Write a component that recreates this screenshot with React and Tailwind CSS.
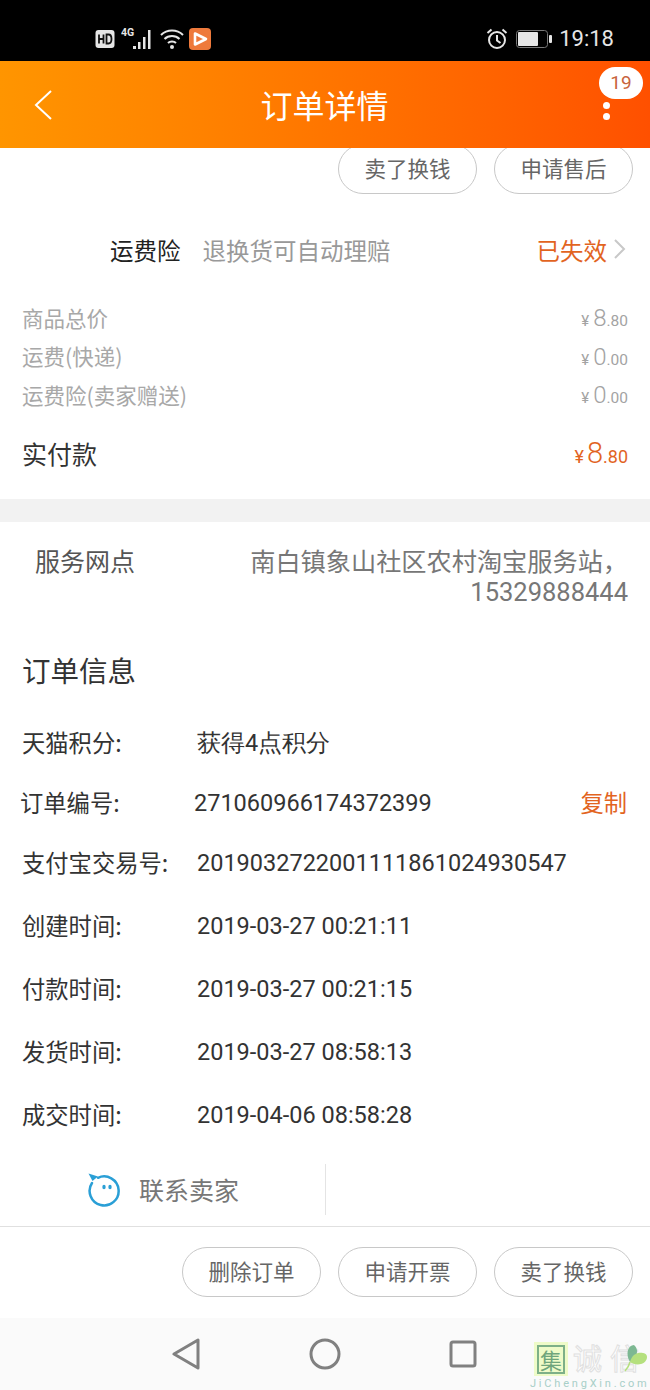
const font = { fontFamily: '"Noto Sans CJK SC", sans-serif' };

const Pill = ({ children }) => (
  <button className="w-[139px] h-[50px] pb-[2px] rounded-full border border-[#c8c8c8] bg-white text-[21.500px] leading-none text-[#666] flex items-center justify-center">
    {children}
  </button>
);

const Price = ({ big, small, color = 'text-[#a3a3a3]', large }) => (
  <div className={`flex items-baseline ${color} font-['Roboto']`}>
    <span className={large ? 'text-[18px] mr-[3px]' : 'text-[15px] mr-[4px]'}>¥</span>
    <span className={large ? 'text-[29px] font-light' : 'text-[24px] font-light'}>{big}</span>
    <span className={large ? 'text-[18px]' : 'text-[15.500px]'}>.{small}</span>
  </div>
);

const CostRow = ({ label, big, small, h }) => (
  <div className={`flex items-center justify-between ${h}`}>
    <span className="text-[21.500px] text-[#a8a8a8]">{label}</span>
    <Price big={big} small={small} />
  </div>
);

const InfoRow = ({ label, value, h = 'h-[63px]', valueClass = 'ml-[175px]', children, labelClass = '' }) => (
  <div className={`flex items-center ${h} relative text-[#333] text-[23.300px] leading-none`}>
    <span className={`w-0 whitespace-nowrap ${labelClass}`}>{label}</span>
    <span className={`${valueClass} mt-[2px] font-['Roboto'] text-[23.500px] whitespace-nowrap`}>{value}</span>
    {children}
  </div>
);

export default function App() {
  return (
    <div className="w-[650px] h-[1390px] bg-white overflow-hidden relative flex flex-col" style={font}>
      {/* status bar */}
      <div className="h-[61px] bg-black flex items-end pb-[10px] shrink-0">
        <div className="ml-[95px] flex items-center gap-[4px] h-[24px]">
          <svg width="20" height="20" viewBox="0 0 20 20">
            <rect x="0.5" y="1" width="19" height="18" rx="3" fill="#e6e6e6" />
            <path d="M4 5.500v9M4 10h4.500M8.500 5.500v9M11.500 5.500v9h2c2.500 0 3-2 3-4.500s-.5-4.500-3-4.500z" stroke="#111" strokeWidth="1.800" fill="none" />
          </svg>
          <svg width="34" height="24" viewBox="0 0 34 24" className="ml-[2px]">
            <text x="0" y="9" fill="#e6e6e6" fontSize="10.500" fontWeight="700" fontFamily="Roboto">4G</text>
            <rect x="12" y="19" width="3" height="3" fill="#e6e6e6" />
            <rect x="17" y="15" width="2.500" height="7" fill="#e6e6e6" />
            <rect x="22" y="10" width="2.500" height="12" fill="#e6e6e6" />
            <rect x="27" y="3" width="2.500" height="19" fill="#e6e6e6" />
          </svg>
          <svg width="26" height="22" viewBox="0 0 26 22" fill="none" stroke="#e6e6e6" strokeWidth="2">
            <path d="M2 7c6-6 16-6 22 0M5.500 11c4-4 11-4 15 0M9 15c2-2 6-2 8 0" />
            <circle cx="13" cy="19" r="2" fill="#e6e6e6" stroke="none" />
          </svg>
          <svg width="22" height="22" viewBox="0 0 22 22">
            <rect x="0" y="0" width="22" height="22" rx="4" fill="#ee7a3c" />
            <path d="M6 5.500l11 5.500-11 5.500z" fill="none" stroke="#fff" strokeWidth="2.600" strokeLinejoin="round" />
          </svg>
        </div>
        <div className="ml-auto mr-[36px] flex items-center h-[24px]">
          <svg width="22" height="22" viewBox="0 0 22 22" fill="none" stroke="#e6e6e6" strokeWidth="2" className="mr-[8px]">
            <circle cx="11" cy="12" r="8" />
            <path d="M11 7v5.500l3.500 2.500M1.500 5l4-3.500M20.500 5l-4-3.500" />
          </svg>
          <svg width="36" height="18" viewBox="0 0 36 18" className="mr-[7px]">
            <rect x="0.500" y="0.500" width="31" height="17" rx="3" fill="none" stroke="#777" />
            <rect x="2" y="2" width="20" height="14" rx="1" fill="#e6e6e6" />
            <rect x="33" y="5" width="3" height="8" rx="1" fill="#e6e6e6" />
          </svg>
          <span className="text-[22px] text-[#e6e6e6] font-['Roboto'] leading-none">19:18</span>
        </div>
      </div>

      {/* header */}
      <div className="h-[87px] pb-[2px] pr-[1px] shrink-0 bg-gradient-to-r from-[#ff9500] to-[#ff5000] flex items-center justify-center relative z-10">
        <svg width="20" height="32" viewBox="0 0 20 32" fill="none" stroke="#fff" strokeWidth="2" className="absolute left-[33px] top-[28px]">
          <path d="M18 2L3 16l15 14" />
        </svg>
        <span className="text-[32px] text-white leading-none">订单详情</span>
        <span className="absolute right-[7px] top-[6px] w-[44px] h-[32px] rounded-full bg-white text-[#c8643c] text-[19px] font-['Roboto'] flex items-center justify-center">19</span>
        <span className="absolute left-[603px] top-[41px] w-[7px] h-[7px] rounded-full bg-white" />
        <span className="absolute left-[603px] top-[52px] w-[7px] h-[7px] rounded-full bg-white" />
      </div>

      <div className="flex justify-end gap-[17px] pr-[17px] -mt-[4px] shrink-0">
        <Pill>卖了换钱</Pill>
        <Pill>申请售后</Pill>
      </div>

      {/* freight insurance */}
      <div className="h-[59px] mt-[27px] shrink-0 flex items-center pl-[110px] pr-[23px] text-[23.500px]">
        <span className="text-[#222]">运费险</span>
        <span className="ml-[22px] text-[#999]">退换货可自动理赔</span>
        <span className="ml-auto text-[#e2641f]">已失效</span>
        <svg width="14" height="24" viewBox="0 0 14 24" fill="none" stroke="#c8c8c8" strokeWidth="2" className="ml-[6px] mb-[3px]">
          <path d="M2 3l9 9-9 9" />
        </svg>
      </div>

      {/* cost summary */}
      <div className="pl-[22px] pr-[22px] mt-[19px] shrink-0">
        <CostRow label="商品总价" big="8" small="80" h="h-[38px]" />
        <CostRow label="运费(快递)" big="0" small="00" h="h-[39px]" />
        <CostRow label="运费险(卖家赠送)" big="0" small="00" h="h-[38px]" />
        <div className="flex items-center justify-between h-[40px] mt-[20px]">
          <span className="text-[25px] text-[#333]">实付款</span>
          <Price big="8" small="80" color="text-[#e2641f]" large />
        </div>
      </div>

      <div className="h-[23px] bg-[#f2f2f2] mt-[25px] shrink-0" />

      {/* service point */}
      <div className="flex mt-[20px] pl-[35px] pr-[22px] shrink-0">
        <span className="text-[25px] leading-[36px] text-[#555] whitespace-nowrap">服务网点</span>
        <div className="ml-auto w-[380px] text-right text-[25.200px] leading-[30px] text-[#777] pt-[3px] whitespace-nowrap">
          南白镇象山社区农村淘宝服务站，<br />
          <span className="font-['Roboto'] text-[25.500px]">15329888444</span>
        </div>
      </div>

      {/* order info */}
      <div className="pl-[22px] pr-[22px] shrink-0">
        <div className="text-[28.500px] leading-[40px] text-[#333] mt-[43px] mb-[23px]">订单信息</div>
        <InfoRow label="天猫积分:" value="获得4点积分" h="h-[60px]" />
        <InfoRow label="订单编号:" value="271060966174372399" h="h-[60px]" labelClass="-ml-[2px]" valueClass="ml-[174px]">
          <span className="absolute right-[1px] text-[#e2641f]">复制</span>
        </InfoRow>
        <InfoRow label="支付宝交易号:" value="2019032722001111861024930547" h="h-[59px] mb-[2px]" />
        <InfoRow label="创建时间:" value="2019-03-27 00:21:11" />
        <InfoRow label="付款时间:" value="2019-03-27 00:21:15" />
        <InfoRow label="发货时间:" value="2019-03-27 08:58:13" />
        <InfoRow label="成交时间:" value="2019-04-06 08:58:28" />
      </div>

      {/* contact seller */}
      <div className="flex items-center h-[51px] mt-[18px] shrink-0">
        <div className="w-[326px] h-full border-r border-[#e4e4e4] flex items-center pl-[87px]">
          <svg width="34" height="34" viewBox="0 0 34 34" fill="none">
            <path d="M11 4.800A14.500 14.500 0 1 1 5 10" stroke="#2a9fd6" strokeWidth="2.500" strokeLinecap="round" />
            <path d="M1.500 0.500l9.500 3-5.500 4.500z" fill="#2a9fd6" />
            <ellipse cx="17" cy="14" rx="1.700" ry="2.200" fill="#2a9fd6" />
            <ellipse cx="23" cy="14" rx="1.700" ry="2.200" fill="#2a9fd6" />
          </svg>
          <span className="ml-[18px] text-[25px] text-[#777]">联系卖家</span>
        </div>
      </div>

      {/* action bar */}
      <div className="h-[92px] mt-[11px] border-t border-[#e0e0e0] flex justify-end gap-[17px] pr-[17px] pt-[20px] shrink-0">
        <Pill>删除订单</Pill>
        <Pill>申请开票</Pill>
        <Pill>卖了换钱</Pill>
      </div>

      {/* android nav */}
      <div className="flex-1 bg-[#fafafa] flex items-center justify-center gap-[108px] pr-[2px] relative">
        <svg width="30" height="32" viewBox="0 0 30 32" fill="none" stroke="#808080" strokeWidth="3" strokeLinejoin="round">
          <path d="M27 2v28L3 16z" />
        </svg>
        <svg width="32" height="32" viewBox="0 0 32 32" fill="none" stroke="#808080" strokeWidth="3">
          <circle cx="16" cy="16" r="14" />
        </svg>
        <svg width="28" height="28" viewBox="0 0 28 28" fill="none" stroke="#808080" strokeWidth="3">
          <rect x="2" y="2" width="24" height="24" rx="2" />
        </svg>
        {/* watermark */}
        <div className="absolute left-[532px] top-[24px] w-[118px] h-[48px]">
          <div className="absolute left-[2px] top-0 w-[34px] h-[34px] bg-[#eefbc8] flex items-center justify-center">
            <span className="w-[28px] h-[29px] border-2 border-[#7db088] text-[#6fa57c] text-[22px] leading-none flex items-center justify-center">集</span>
          </div>
          <span className="absolute left-[41px] top-0 text-[29px] leading-[30px] tracking-[8px] text-white whitespace-nowrap" style={{ WebkitTextStroke: '1px #e0e0e0' }}>诚信</span>
          <svg width="30" height="34" viewBox="0 0 30 34" className="absolute left-[92px] top-0">
            <path d="M6 20C1 12 4 3 10 3c5 4 4 12-4 17z" fill="#7db892" />
            <path d="M6 20c2-8 8-10 13-9 7 1 4 10-2 11-4 1-8 0-11-2z" fill="#b5e07e" />
            <path d="M6 20C5 24 3 27 1 29" stroke="#b5e07e" strokeWidth="1.500" fill="none" />
          </svg>
          <span className="absolute left-[-2px] top-[36px] text-[11px] leading-none tracking-[2.800px] text-[#a8cfc8] font-['Roboto'] whitespace-nowrap">JiChengXin.com</span>
        </div>
      </div>
    </div>
  );
}
